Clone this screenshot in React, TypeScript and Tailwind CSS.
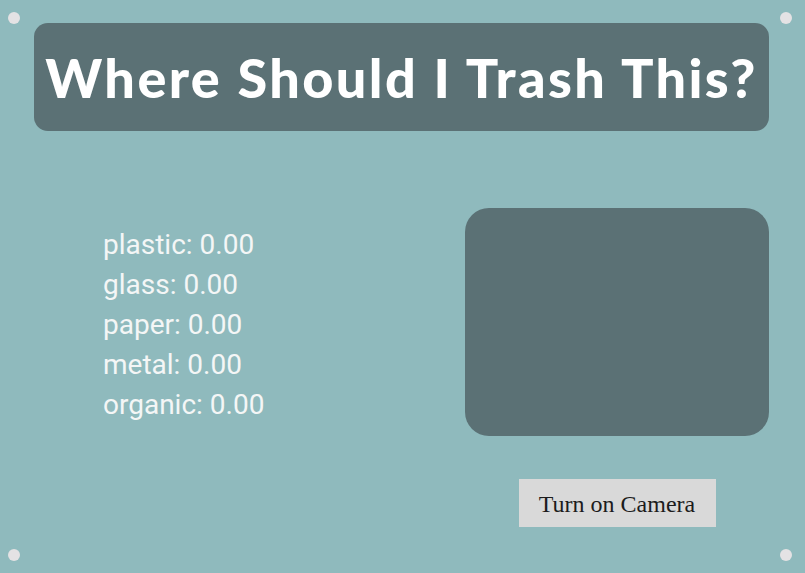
import React from 'react';

const scores = [
  { name: 'plastic', value: 0 },
  { name: 'glass', value: 0 },
  { name: 'paper', value: 0 },
  { name: 'metal', value: 0 },
  { name: 'organic', value: 0 },
];

const Dot: React.FC<{ className: string }> = ({ className }) => (
  <div className={`absolute w-[12px] h-[12px] rounded-full bg-[#e4e2e4] ${className}`} />
);

export default function App() {
  return (
    <div className="relative w-full h-[573px] bg-[#8fbabd] overflow-hidden">
      <Dot className="left-[8px] top-[12px]" />
      <Dot className="right-[13px] top-[12px]" />
      <Dot className="left-[8px] bottom-[12px]" />
      <Dot className="right-[13px] bottom-[12px]" />

      <div className="pt-[23px] px-[34px] pr-[36px]">
        <div className="h-[108px] rounded-[14px] bg-[#5b7175] flex items-center justify-center">
          <h1
            className="text-white text-[54px] font-black tracking-[2.4px] whitespace-nowrap leading-none pt-[2px]"
            style={{ fontFamily: 'Lato, "Noto Sans", sans-serif' }}
          >
            Where Should I Trash This?
          </h1>
        </div>
      </div>

      <div className="flex mt-[77px] pl-[103px] pr-[36px]">
        <div
          className="flex-1 pt-[17px] text-[#f4f6f6] text-[28px] leading-[40px]"
          style={{ fontFamily: '"Liberation Sans Narrow", Roboto, sans-serif' }}
        >
          {scores.map((s) => (
            <div key={s.name}>
              {s.name}: {s.value.toFixed(2)}
            </div>
          ))}
        </div>
        <div className="flex flex-col items-center">
          <div className="w-[304px] h-[228px] rounded-[24px] bg-[#5b7175]" />
          <button
            className="mt-[43px] w-[197px] h-[48px] bg-[#d9d9d9] text-[#1c1c1c] text-[24px] pt-[2px]"
            style={{ fontFamily: '"Liberation Serif", "DejaVu Serif", serif' }}
          >
            Turn on Camera
          </button>
        </div>
      </div>
    </div>
  );
}
